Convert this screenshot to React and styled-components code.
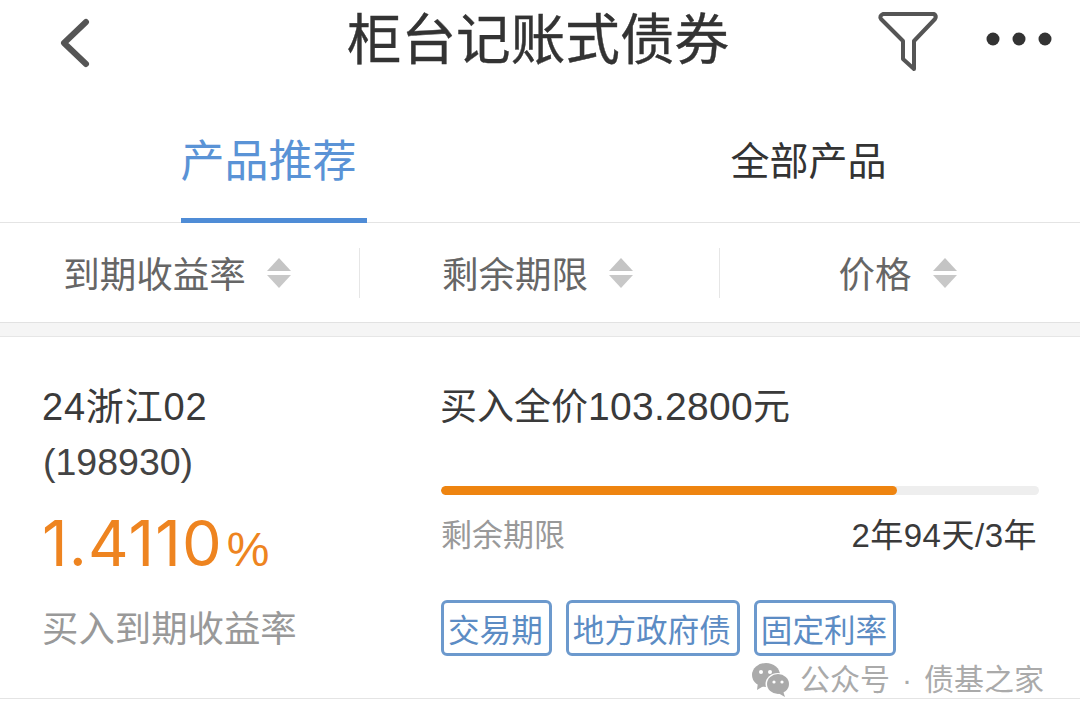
import styled, { createGlobalStyle } from "styled-components";

const Global = createGlobalStyle`
  html, body {
    margin: 0;
    padding: 0;
    background: #fff;
  }
  body {
    font-family: "Liberation Sans", "Noto Sans CJK SC", sans-serif;
    color: #333;
  }
`;

const Page = styled.div`
  width: 1080px;
  height: 723px;
  overflow: hidden;
  background: #fff;
`;

const Header = styled.header`
  height: 80px;
  display: grid;
  grid-template-columns: 300px 1fr 300px;
  align-items: center;
`;

const BackButton = styled.div`
  display: flex;
  align-items: center;
  padding-left: 57px;
  padding-top: 4px;
`;

const Title = styled.h1`
  margin: 0;
  padding-right: 4px;
  text-align: center;
  font-size: 54.6px;
  font-weight: 400;
  line-height: 82px;
  color: #333;
  -webkit-text-stroke: 0.4px #333;
`;

const HeaderActions = styled.div`
  display: flex;
  align-items: center;
  justify-content: flex-end;
  gap: 47px;
  padding-right: 28px;
`;

const MoreIcon = styled.svg`
  margin-bottom: 4px;
`;

const Tabs = styled.nav`
  height: 143px;
  display: grid;
  grid-template-columns: 1fr 1fr;
  border-bottom: 1px solid #e4e4e4;
  box-sizing: border-box;
`;

const Tab = styled.div`
  position: relative;
  display: flex;
  align-items: center;
  justify-content: center;
  padding: 13px 3px 0 0;
  font-size: ${(p) => (p.$active ? "44px" : "39px")};
  color: ${(p) => (p.$active ? "#5a93d6" : "#333")};
  ${(p) =>
    p.$active &&
    `&::after {
      content: "";
      position: absolute;
      left: 181px;
      bottom: -1px;
      width: 186px;
      height: 5px;
      background: #4f8cd6;
    }`}
`;

const SortBar = styled.div`
  height: 99px;
  display: grid;
  grid-template-columns: repeat(3, 1fr);
  align-items: center;
`;

const SortCell = styled.div`
  height: 50px;
  display: flex;
  align-items: center;
  justify-content: center;
  gap: 21px;
  padding-right: 5px;
  margin-left: -1px;
  font-size: 36.5px;
  color: #666;
  box-sizing: border-box;
  border-left: ${(p) => (p.$divider ? "1px solid #e6e6e6" : "none")};
`;

const Band = styled.div`
  height: 15px;
  box-sizing: border-box;
  background: #f5f5f5;
  border-top: 1px solid #e2e2e2;
  border-bottom: 1px solid #e6e6e6;
`;

const Card = styled.section`
  position: relative;
  height: 362px;
  box-sizing: border-box;
  border-bottom: 1px solid #e4e4e4;
  display: grid;
  grid-template-columns: 441px 1fr;
`;

const LeftCol = styled.div`
  padding: 46px 0 0 42px;
  display: flex;
  flex-direction: column;
`;

const BondName = styled.div`
  font-size: 38px;
  line-height: 48px;
  color: #3a3a3a;
  letter-spacing: 0.8px;
`;

const BondCode = styled.div`
  font-size: 37.5px;
  line-height: 48px;
  margin: 7px 0 0 1px;
  color: #444;
`;

const Yield = styled.div`
  margin-top: 17px;
  font-family: Inter, "Liberation Sans", sans-serif;
  font-size: 63px;
  line-height: 80px;
  color: #ee8420;
  letter-spacing: 1.1px;
`;

const YieldUnit = styled.span`
  font-family: "Liberation Sans", sans-serif;
  font-size: 48px;
  margin-left: 4px;
  letter-spacing: 0;
`;

const YieldLabel = styled.div`
  margin-top: 16px;
  font-size: 36.4px;
  line-height: 48px;
  color: #999;
`;

const RightCol = styled.div`
  padding: 46px 41px 0 0;
  display: flex;
  flex-direction: column;
`;

const PriceLine = styled.div`
  margin-left: -1px;
  font-size: 37px;
  line-height: 48px;
  color: #3a3a3a;
`;

const Digits = styled.span`
  font-size: 39px;
  letter-spacing: 0.3px;
`;

const Progress = styled.div`
  margin-top: 54px;
  height: 9px;
  border-radius: 5px;
  background: #eee;
  overflow: hidden;
`;

const ProgressFill = styled.div`
  height: 100%;
  border-radius: 5px;
  background: #ee8410;
`;

const TermRow = styled.div`
  margin-top: 20px;
  display: flex;
  align-items: center;
  justify-content: space-between;
  padding-right: 2px;
  line-height: 42px;
`;

const TermLabel = styled.span`
  font-size: 31px;
  color: #999;
`;

const TermValue = styled.span`
  font-size: 33px;
  letter-spacing: 0.5px;
  color: #3a3a3a;
`;

const TagRow = styled.div`
  margin-top: 43px;
  display: flex;
  gap: 14px;
`;

const Tag = styled.span`
  height: 56px;
  box-sizing: border-box;
  display: flex;
  align-items: center;
  padding: 0 6px 0 4px;
  border: 3px solid #6c99cd;
  border-radius: 6px;
  font-size: 31.6px;
  color: #5c8cc4;
  white-space: nowrap;
`;

const Watermark = styled.div`
  position: absolute;
  left: 752px;
  top: 323px;
  display: flex;
  align-items: center;
  gap: 10px;
  font-size: 30px;
  line-height: 40px;
  color: #aaa;
  white-space: nowrap;
`;

const Dot = styled.span`
  margin: 0 12px;
`;

function SortArrows() {
  return (
    <svg width="24" height="30" viewBox="0 0 24 30">
      <path d="M12 0 L24 13 H0 Z" fill="#c4c4c4" />
      <path d="M0 17 H24 L12 30 Z" fill="#c8c8c8" />
    </svg>
  );
}

function WeChatMark() {
  return (
    <svg width="38" height="34" viewBox="0 0 38 34">
      <ellipse cx="14" cy="12" rx="14" ry="12" fill="#aaa" />
      <path d="M6 19 L5 27 L13 22 Z" fill="#aaa" />
      <ellipse cx="26" cy="21" rx="12.5" ry="11" fill="#fff" />
      <ellipse cx="26" cy="21" rx="11" ry="10" fill="#aaa" />
      <path d="M31 28 L33 34 L26 30 Z" fill="#aaa" />
      <circle cx="9" cy="9" r="2" fill="#fff" />
      <circle cx="18" cy="9" r="2" fill="#fff" />
      <circle cx="22" cy="19" r="1.6" fill="#fff" />
      <circle cx="30" cy="19" r="1.6" fill="#fff" />
    </svg>
  );
}

const sorts = ["到期收益率", "剩余期限", "价格"];
const tags = ["交易期", "地方政府债", "固定利率"];

export default function App() {
  return (
    <Page>
      <Global />
      <Header>
        <BackButton>
          <svg width="36" height="50" viewBox="0 0 36 50">
            <path
              d="M29 4 L7 25 L29 46"
              fill="none"
              stroke="#555"
              strokeWidth="6"
              strokeLinecap="round"
              strokeLinejoin="round"
            />
          </svg>
        </BackButton>
        <Title>柜台记账式债券</Title>
        <HeaderActions>
          <svg width="62" height="66" viewBox="0 0 62 66">
            <path
              d="M6 6 H57 Q60 8 58 11 L37 33 V61 L26 51 V33 L4 11 Q2 8 6 6 Z"
              fill="none"
              stroke="#555"
              strokeWidth="4"
              strokeLinejoin="round"
            />
          </svg>
          <MoreIcon width="66" height="16" viewBox="0 0 66 16">
            <circle cx="7" cy="8" r="6.5" fill="#333" />
            <circle cx="33" cy="8" r="6.5" fill="#333" />
            <circle cx="59" cy="8" r="6.5" fill="#333" />
          </MoreIcon>
        </HeaderActions>
      </Header>
      <Tabs>
        <Tab $active>产品推荐</Tab>
        <Tab>全部产品</Tab>
      </Tabs>
      <SortBar>
        {sorts.map((s, i) => (
          <SortCell key={s} $divider={i > 0}>
            {s}
            <SortArrows />
          </SortCell>
        ))}
      </SortBar>
      <Band />
      <Card>
        <LeftCol>
          <BondName>24浙江02</BondName>
          <BondCode>(198930)</BondCode>
          <Yield>
            1.4110<YieldUnit>%</YieldUnit>
          </Yield>
          <YieldLabel>买入到期收益率</YieldLabel>
        </LeftCol>
        <RightCol>
          <PriceLine>
            买入全价<Digits>103.2800</Digits>元
          </PriceLine>
          <Progress>
            <ProgressFill style={{ width: "76.3%" }} />
          </Progress>
          <TermRow>
            <TermLabel>剩余期限</TermLabel>
            <TermValue>2年94天/3年</TermValue>
          </TermRow>
          <TagRow>
            {tags.map((t) => (
              <Tag key={t}>{t}</Tag>
            ))}
          </TagRow>
        </RightCol>
        <Watermark>
          <WeChatMark />
          <span>
            公众号<Dot>·</Dot>债基之家
          </span>
        </Watermark>
      </Card>
    </Page>
  );
}
